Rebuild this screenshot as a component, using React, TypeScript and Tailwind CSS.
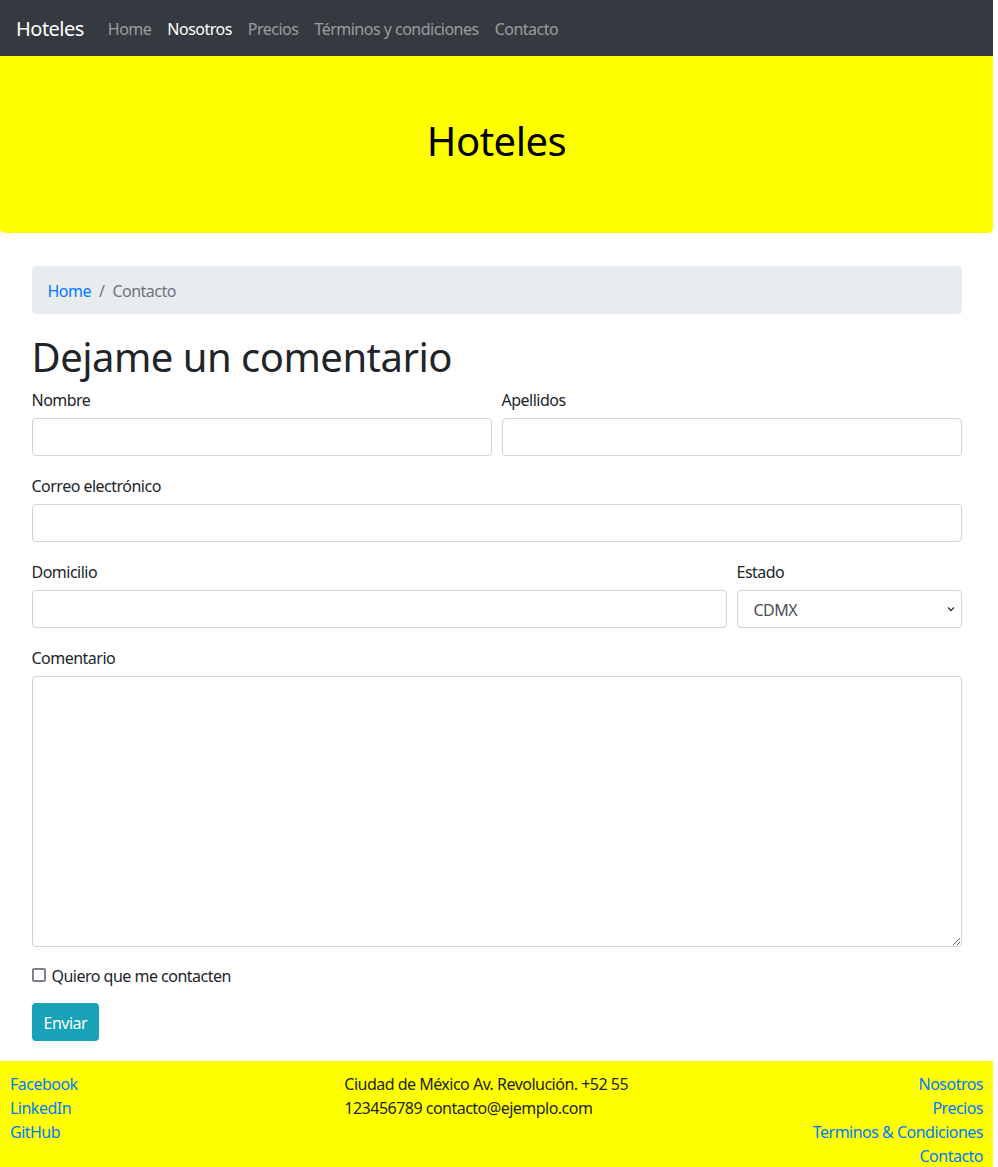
import React from "react";

const font = { fontFamily: '"Noto Sans", "Open Sans", sans-serif' };

const inputCls = "w-full h-[38px] border border-[#ced4da] rounded-[4px] px-3 block";

export default function App() {
  return (
    <div className="w-[993px] bg-white text-[#212529] text-[16px] leading-[1.5] tracking-[-0.032em]" style={font}>
      {/* Navbar */}
      <nav className="h-[56px] bg-[#343a40] flex items-center px-4 pt-[1px]">
        <span className="text-[20px] text-white mr-4 leading-[30px]">Hoteles</span>
        <div className="flex items-center">
          <a className="px-2 text-white/50">Home</a>
          <a className="px-2 text-white">Nosotros</a>
          <a className="px-2 text-white/50">Precios</a>
          <a className="px-2 text-white/50">Términos y condiciones</a>
          <a className="px-2 text-white/50">Contacto</a>
        </div>
      </nav>

      {/* Jumbotron */}
      <div className="bg-[#ffff00] rounded-b-[5px] h-[177px] flex items-center justify-center">
        <h1 className="text-[40px] leading-[1.2] font-normal -mt-[8px] text-black">Hoteles</h1>
      </div>

      {/* Container */}
      <div className="w-[930px] mx-auto pt-[33px] pb-[20px]">
        <div className="bg-[#e9ecef] rounded-[4px] h-[48px] flex items-center px-4 mb-4 pt-[2px]">
          <a className="text-[#007bff]">Home</a>
          <span className="px-2 text-[#6c757d]">/</span>
          <span className="text-[#6c757d]">Contacto</span>
        </div>

        <h1 className="text-[40px] leading-[1.2] font-normal pt-[3px] mb-[5px]">Dejame un comentario</h1>

        <div className="flex flex-col">
          <div className="grid grid-cols-2 gap-[10px] mb-4">
            <div>
              <label className="block pt-[2px] mb-[6px]">Nombre</label>
              <input className={inputCls} />
            </div>
            <div>
              <label className="block pt-[2px] mb-[6px]">Apellidos</label>
              <input className={inputCls} />
            </div>
          </div>

          <div className="mb-4">
            <label className="block pt-[2px] mb-[6px]">Correo electrónico</label>
            <input className={inputCls} />
          </div>

          <div className="grid grid-cols-[695px_225px] gap-[10px] mb-4">
            <div>
              <label className="block pt-[2px] mb-[6px]">Domicilio</label>
              <input className={inputCls} />
            </div>
            <div>
              <label className="block pt-[2px] mb-[6px]">Estado</label>
              <div className="relative h-[38px] border border-[#ced4da] rounded-[4px] flex items-center pl-4 pt-[2px] text-[#495057]">
                CDMX
                <svg className="absolute right-[5px] top-[14px]" width="10" height="8" viewBox="0 0 10 8">
                  <path d="M2 2.5 L5 5.5 L8 2.5" fill="none" stroke="#333" strokeWidth="1.3" />
                </svg>
              </div>
            </div>
          </div>

          <div className="mb-4">
            <label className="block pt-[2px] mb-[6px]">Comentario</label>
            <textarea className="w-full h-[271px] border border-[#ced4da] rounded-[4px] px-3 block" />
          </div>

          <div className="flex items-center mb-4 h-[24px] pt-[2px]">
            <span className="w-[14px] h-[14px] border-2 border-[#80808c] rounded-[2px] mr-[6px] box-border -mt-[2px]" />
            <span>Quiero que me contacten</span>
          </div>

          <div>
            <button className="h-[38px] px-3 pt-[2px] bg-[#17a2b8] text-white rounded-[4px] tracking-[-0.032em]">Enviar</button>
          </div>
        </div>
      </div>

      {/* Footer */}
      <footer className="bg-[#ffff00] pt-[11px] pb-[10px] px-[10px] grid grid-cols-3">
        <div className="flex flex-col text-[#007bff]">
          <a>Facebook</a>
          <a>LinkedIn</a>
          <a>GitHub</a>
        </div>
        <div className="pl-[10px] pr-[10px]">
          Ciudad de México Av. Revolución. +52 55 123456789 contacto@ejemplo.com
        </div>
        <div className="flex flex-col items-end text-[#007bff]">
          <a>Nosotros</a>
          <a>Precios</a>
          <a>Terminos &amp; Condiciones</a>
          <a>Contacto</a>
        </div>
      </footer>
    </div>
  );
}
